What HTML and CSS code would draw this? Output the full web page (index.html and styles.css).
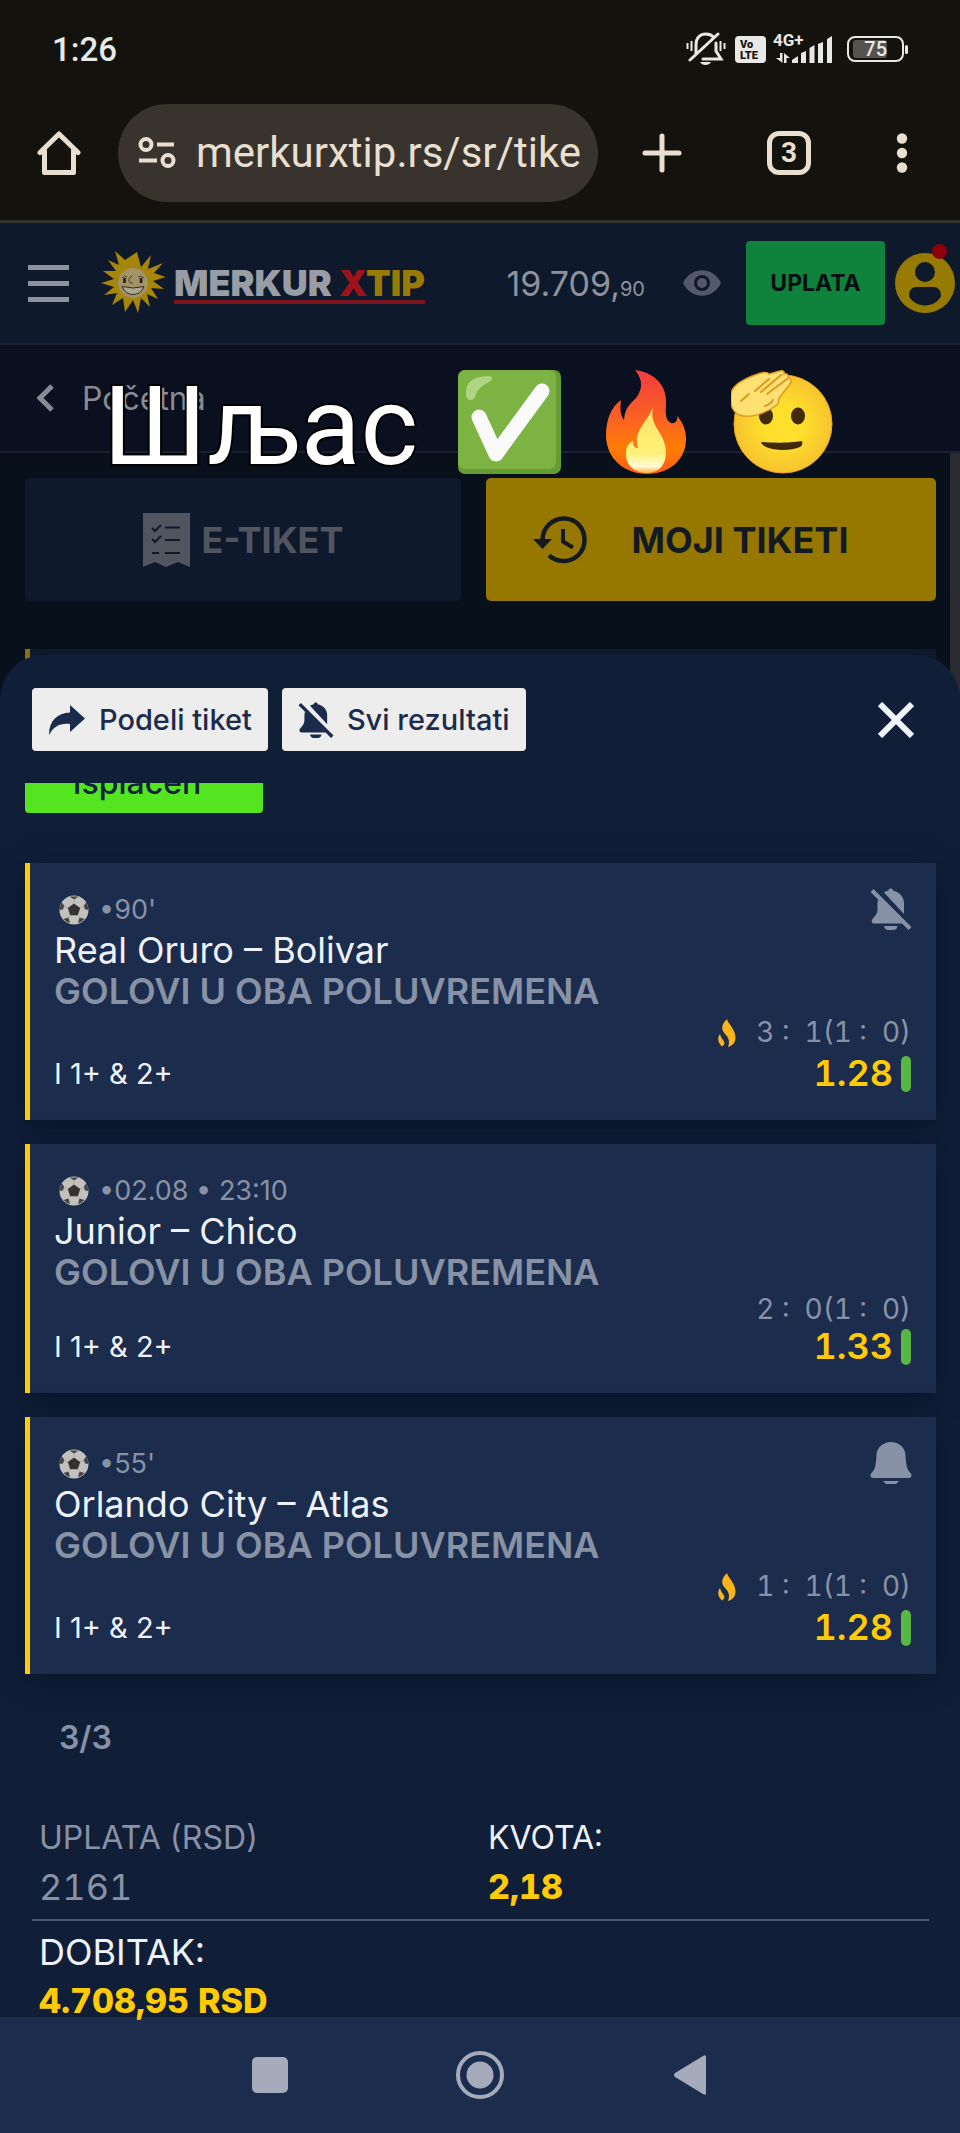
FILE: index.html
```html
<!DOCTYPE html>
<html lang="sr">
  <head>
    <meta charset="UTF-8" />
    <meta name="viewport" content="width=device-width, initial-scale=1.0" />
    <title>Moji tiketi - MerkurXtip</title>
    <link rel="stylesheet" href="styles.css">
  </head>
  <body>
    <!-- Shared icons -->
    <svg class="sprite" aria-hidden="true">
      <symbol id="ball" viewBox="0 0 30 30">
        <circle cx="15" cy="15" r="14.5" fill="#c3c1bd" />
        <path d="M15 8.5l6.2 4.5-2.4 7.300h-7.600L8.800 13z" fill="#333" />
        <path d="M10.500 1.500h9L15 4.500zM.8 12.500L2.500 7l2.800 3.800L4 14.500.6 15zM29.200 12.500L27.500 7l-2.800 3.800L26 14.500l3.400.5zM4.500 24l5-1.500 1.500 5.500-3-1zM25.500 24l-5-1.500-1.500 5.500 3-1z" fill="#444" />
        <path d="M15 4.500v4M8.800 13l-4-1.500M21.200 13l4-1.500M11.200 20.300L9 23M18.800 20.300L21 23" stroke="#a9a7a3" fill="none" />
      </symbol>
      <symbol id="bell-off" viewBox="0 0 42 42">
        <path d="M14 4.500C15.500 3.500 17 3 18.500 2.600 18.500 1 19.500.5 20.700.5s2.200.5 2.200 2.100C29.500 4 34 9 34 15v11z" fill="currentColor" />
        <path d="M8.500 11L33 35.500H4C1.500 35.500 1 33 2.500 31c3-3.500 5-5.500 5-10v-6c0-1.500.3-2.700 1-4zM14 38h13.500c-.5 2.500-2 4-4 4h-5.500c-2 0-3.500-1.500-4-4z" fill="currentColor" />
        <path d="M2 2.500L40 40.500" stroke="currentColor" stroke-width="4" />
      </symbol>
      <symbol id="bell" viewBox="0 0 42 42">
        <path d="M21 0c8 0 14 5.500 14.500 13 .5 9 1 14 5 18 1.500 1.500 1.500 5-1.500 5H3c-3 0-3-3.500-1.500-5 4-4 4.500-9 5-18C7 5.500 13 0 21 0zM13 39h16l-3 3H16z" fill="currentColor" />
      </symbol>
      <symbol id="flame" viewBox="0 0 18 28">
        <path d="M9 0c1 5 8.500 10 8.500 18.500 0 5-3 8.500-7.500 9.500 2-5 1-9-2.500-12.500C2 10 4 5 9 0zM2 15c-3 4-2 9 2 12.500 2-1 3-2.500 2-5-1-2-3.500-4-4-7.500z" fill="#fbb51b" />
      </symbol>
    </svg>

    <div class="status-bar">
      <span class="clock">1:26</span>
      <div class="status-icons">
        <svg width="40" height="34" viewBox="0 0 40 34" fill="none" stroke="currentColor" stroke-width="3">
          <path d="M10 22V13C10 6 14 2 20 2c3 0 5.500 1 7.500 3M30 11v8l5 8H17M4 28L32 2" stroke-linecap="round" />
          <path d="M5.500 9v10M1.500 11v6M34.500 9v10M38.500 11v6" stroke-width="2" />
          <path d="M14 30h11c-2 4-9 4-11 0z" fill="currentColor" stroke="none" />
        </svg>
        <span class="volte">Vo<br />LTE</span>
        <span class="signal">
          <span class="network">4G+</span>
          <svg width="60" height="27" viewBox="0 0 60 27" fill="currentColor">
            <path d="M5 17h2.500v10L1 22h4zM9 27V17l6 5h-3.500v5zM17 24l6-4v7h-6zM26 17l5-2v12h-5zM34.500 12l5-3v18h-5zM43 8l5-2v21h-5zM52 3l5-3v27h-5z" />
          </svg>
        </span>
        <span class="battery"><span>75</span></span>
      </div>
    </div>

    <div class="browser-bar">
      <button class="icon-btn" aria-label="Home">
        <svg width="44" height="44" viewBox="0 0 44 44" fill="none" stroke="currentColor" stroke-width="5" stroke-linejoin="round" stroke-linecap="round">
          <path d="M3 21.500L22 3l19 18.500M7.500 19v22.500h29V19" />
        </svg>
      </button>
      <label class="address">
        <svg width="38" height="31" viewBox="0 0 38 31" fill="none" stroke="currentColor" stroke-width="4">
          <circle cx="8" cy="7.500" r="5.500" />
          <path d="M19 7.500h17M1 23.500h18" />
          <circle cx="30" cy="23.500" r="5.500" />
        </svg>
        <input type="text" value="merkurxtip.rs/sr/tike" aria-label="Address" />
      </label>
      <div class="browser-actions">
        <button class="icon-btn" aria-label="New tab">
          <svg width="40" height="40" viewBox="0 0 40 40" stroke="currentColor" stroke-width="5" stroke-linecap="round"><path d="M20 3v34M3 20h34" /></svg>
        </button>
        <button class="tab-count">3</button>
        <button class="icon-btn" aria-label="Menu">
          <svg width="12" height="40" viewBox="0 0 12 40" fill="currentColor"><circle cx="6" cy="5.500" r="5.200" /><circle cx="6" cy="20" r="5.200" /><circle cx="6" cy="34.500" r="5.200" /></svg>
        </button>
      </div>
    </div>

    <header class="site-header">
      <button class="menu-btn" aria-label="Meni"><span></span><span></span><span></span></button>
      <a href="#" class="logo">
        <svg width="64" height="64" viewBox="-32 -32 64 64">
          <path fill="#a58609" d="M4-31l4 15 10-12-3 14 15-6-9 10 12 4-13 4 11 8-13-1 7 11-11-5 3 13-9-9-3 15-5-13-8 12-2-14-11 7 5-12-13 2 10-8-13-4 13-4-11-8 13 0-8-11 11 5-4-14 10 9z" />
          <circle r="15" fill="#a39368" />
          <path d="M-11-5q2-3 5-1M5-6q3-2 6 1M-1-7q-5 3-2 7l3 0" fill="none" stroke="#4b4529" stroke-width="1" />
          <path d="M-8.500-5v5M8-5v5" stroke="#1b1a12" stroke-width="2.500" />
          <path d="M-11 3.500q11 3 22 0-3 8-11 8t-11-8z" fill="#aaa68f" stroke="#33301f" stroke-width="1" />
        </svg>
        <span class="logo-text">MERKUR <span class="logo-x">X</span><span class="logo-tip">TIP</span></span>
      </a>
      <span class="balance">19.709,<small>90</small></span>
      <button class="icon-btn eye" aria-label="Prikaži stanje">
        <svg width="38" height="26" viewBox="0 0 38 26">
          <path d="M0 13C8-4 30-4 38 13 30 30 8 30 0 13z" fill="#53596a" />
          <circle cx="19" cy="13" r="8" fill="#0f192c" />
          <circle cx="19" cy="13" r="5" fill="#53596a" />
        </svg>
      </button>
      <button class="deposit-btn">UPLATA</button>
      <a href="#" class="avatar" aria-label="Profil">
        <svg width="60" height="60" viewBox="0 0 60 60">
          <circle cx="30" cy="30" r="30" fill="#977a02" />
          <circle cx="30" cy="19" r="10" fill="#0f192c" />
          <path d="M14 43c0-6 3-9 8-9h16c5 0 8 3 8 9-3 6-9 9.500-16 9.500S17 49 14 43z" fill="#0f192c" />
        </svg>
      </a>
    </header>

    <nav class="breadcrumb">
      <a href="#">
        <svg width="18" height="28" viewBox="0 0 18 28" fill="none" stroke="currentColor" stroke-width="5"><path d="M16 2L4 14l12 12" /></svg>
        Početna
      </a>
    </nav>

    <main class="page">
      <div class="tabs">
        <button class="tab">
          <svg width="47" height="54" viewBox="0 0 47 54">
            <path d="M0 0h47v54l-12-5-12 5-11-5-12 5z" fill="currentColor" />
            <path d="M9 15l3 3 6-6M9 26l3 3 6-6M22 14.500h15M22 27h15M22 40h15M9 40h7" fill="none" stroke="#0f192c" stroke-width="2" />
          </svg>
          E-TIKET
        </button>
        <button class="tab active">
          <svg width="54" height="48" viewBox="0 0 54 48" fill="none" stroke="currentColor">
            <path d="M9.500 24C9.500 12 19 2.500 31 2.500S51.500 12 51.500 24 42 45 31 45c-6 0-11-2-15-5.500" stroke-width="4.500" />
            <path d="M0 23h19L9.500 33z" fill="currentColor" stroke="none" />
            <path d="M30 13v12.500l10 6" stroke-width="4" />
          </svg>
          MOJI TIKETI
        </button>
      </div>
      <div class="ticket-behind"></div>
    </main>

    <section class="sheet">
      <div class="sheet-actions">
        <button class="light-btn">
          <svg width="38" height="32" viewBox="0 0 38 32"><path d="M22 1l15 13.500L22 28v-8C12 19 6 22 1 31 1 17 9 9 22 8.500z" fill="currentColor" /></svg>
          Podeli tiket
        </button>
        <button class="light-btn">
          <svg width="36" height="36"><use href="#bell-off" /></svg>
          Svi rezultati
        </button>
        <button class="icon-btn close-btn" aria-label="Zatvori">
          <svg width="36" height="36" viewBox="0 0 36 36" stroke="currentColor" stroke-width="6"><path d="M2 2l32 32M34 2L2 34" /></svg>
        </button>
      </div>

      <div class="ticket-status"><span>Isplaćen</span></div>

      <div class="bets">
        <article class="bet">
          <div class="bet-meta"><svg width="30" height="30"><use href="#ball" /></svg>•90'</div>
          <h2>Real Oruro – Bolivar</h2>
          <p class="market">GOLOVI U OBA POLUVREMENA</p>
          <p class="score live"><svg width="18" height="28"><use href="#flame" /></svg>3 :  1(1 :  0)</p>
          <div class="pick"><span>I 1+ &amp; 2+</span><b class="odds">1.28</b></div>
          <button class="icon-btn notify" aria-label="Uključi obaveštenja"><svg width="42" height="42"><use href="#bell-off" /></svg></button>
        </article>

        <article class="bet">
          <div class="bet-meta"><svg width="30" height="30"><use href="#ball" /></svg>•02.08 • 23:10</div>
          <h2>Junior – Chico</h2>
          <p class="market">GOLOVI U OBA POLUVREMENA</p>
          <p class="score">2 :  0(1 :  0)</p>
          <div class="pick"><span>I 1+ &amp; 2+</span><b class="odds">1.33</b></div>
        </article>

        <article class="bet">
          <div class="bet-meta"><svg width="30" height="30"><use href="#ball" /></svg>•55'</div>
          <h2>Orlando City – Atlas</h2>
          <p class="market">GOLOVI U OBA POLUVREMENA</p>
          <p class="score live"><svg width="18" height="28"><use href="#flame" /></svg>1 :  1(1 :  0)</p>
          <div class="pick"><span>I 1+ &amp; 2+</span><b class="odds">1.28</b></div>
          <button class="icon-btn notify" aria-label="Isključi obaveštenja"><svg width="42" height="42"><use href="#bell" /></svg></button>
        </article>
      </div>

      <p class="hits">3/3</p>

      <div class="summary">
        <div class="summary-row">
          <div class="stake"><span>UPLATA (RSD)</span><span class="amount">2161</span></div>
          <div><span>KVOTA:</span><strong>2,18</strong></div>
        </div>
        <div class="summary-row payout">
          <div><span class="amount">DOBITAK:</span><strong>4.708,95 RSD</strong></div>
        </div>
      </div>
    </section>

    <nav class="system-nav">
      <button class="icon-btn" aria-label="Recent">
        <svg width="54" height="54" viewBox="0 0 54 54"><rect x="9" y="9" width="36" height="36" rx="5" fill="currentColor" /></svg>
      </button>
      <button class="icon-btn" aria-label="Home">
        <svg width="54" height="54" viewBox="0 0 54 54"><circle cx="27" cy="27" r="22" fill="none" stroke="currentColor" stroke-width="4" /><circle cx="27" cy="27" r="13.500" fill="currentColor" /></svg>
      </button>
      <button class="icon-btn" aria-label="Back">
        <svg width="54" height="54" viewBox="0 0 54 54"><path d="M43 9v36q0 3-3 1L12 29q-2-2 0-4L40 8q3-2 3 1z" fill="currentColor" /></svg>
      </button>
    </nav>

    <!-- Caption over the page -->
    <div class="caption">
      <span>Шљас</span>
      <svg width="103" height="104" viewBox="0 0 103 104">
        <rect width="103" height="104" rx="7" fill="#679c35" />
        <rect width="98" height="99" rx="7" fill="#7cb342" />
        <path d="M8 24C8 12 14 7 30 6c6 0 5 4 1 6-8 4-12 8-14 15-2 5-9 4-9-3z" fill="#aed581" />
        <path d="M21 47l17 37 46-63" fill="none" stroke="#fafafa" stroke-width="15" stroke-linecap="round" stroke-linejoin="round" />
      </svg>
      <svg class="fire" width="80" height="104" viewBox="0 0 80 104">
        <defs>
          <linearGradient id="fire-outer" x1="0" y1="0" x2="0" y2="1"><stop offset="0" stop-color="#f23b3f" /><stop offset=".5" stop-color="#fb6521" /><stop offset=".75" stop-color="#ff7d05" /><stop offset="1" stop-color="#ff5b13" /></linearGradient>
          <linearGradient id="fire-inner" x1="0" y1="0" x2="0" y2="1"><stop offset="0" stop-color="#ffe36b" /><stop offset=".7" stop-color="#fff178" /><stop offset=".9" stop-color="#fffbd8" /><stop offset="1" stop-color="#ffb13b" /></linearGradient>
        </defs>
        <path d="M29 0c18 2 31 14 31 31 0 9-2 19 5 22 4 1 7-2 6-7 6 6 9 15 9 23 0 21-17 35-39 35S0 89 0 65c0-15 5-28 15-35-1 8-1 15 3 20 1-12 6-16 12-22 6-8 8-17-1-28z" fill="url(#fire-outer)" />
        <path d="M47 37c-3 14 4 20 9 30 8 16 4 36-15 36-15 0-22-10-21-21 0-5 3-9 7-11 0 6 2 7 5 7-5-18 9-25 15-41z" fill="url(#fire-inner)" />
      </svg>
      <svg class="salute" width="102" height="104" viewBox="0 0 102 104">
        <defs>
          <radialGradient id="face" cx=".5" cy=".5" r=".5"><stop offset=".4" stop-color="#fddf2c" /><stop offset="1" stop-color="#f7c32f" /></radialGradient>
        </defs>
        <circle cx="52" cy="54" r="49" fill="url(#face)" stroke="#e9a51d" />
        <ellipse cx="35" cy="46" rx="7" ry="8.500" fill="#422b0d" />
        <ellipse cx="67" cy="46" rx="7" ry="8.500" fill="#422b0d" />
        <path d="M31 72c10 1 30 1 39-1 2 0 2 4-1 6-9 4-25 4-34 0-4-2-6-5-4-5z" fill="#422b0d" />
        <path d="M0 23C2 15 13 9 24 5c5-2 12-4 14-1L49 1c3-1 5 1 4 3 3-1 5 1 4 4 3 0 4 3 2 6l-11 14-1 6C36 43 20 49 8 45-1 40-1 31 0 23z" fill="#ffe072" stroke="#dd9822" stroke-width="1.500" />
        <path d="M24 21L38 9M30 22L50 5M36 24L56 9M10 31l8-7M34 36q6-2 8-6" fill="none" stroke="#dd9822" stroke-width="2" stroke-linecap="round" />
      </svg>
    </div>
  </body>
</html>
```

FILE: styles.css
```css
:root {
  --sheet: #101e38;
  --card: #1c2c4c;
  --page: #08101c;
  --header: #0f192c;
  --muted: #8892a6;
  --text: #eef2fa;
  --yellow: #ffcb05;
  --green: #57b742;
  --chrome: #14120c;
  --chrome-text: #e8dfd0;
}

* {
  margin: 0;
  padding: 0;
  box-sizing: border-box;
  font-family: Inter, "Open Sans", sans-serif;
}

body {
  position: relative;
  min-height: 100vh;
  display: flex;
  flex-direction: column;
  background: var(--page);
  color: var(--text);
}

svg {
  display: block;
  flex-shrink: 0;
}

button {
  border: none;
  background: none;
  color: inherit;
  cursor: pointer;
}

a {
  color: inherit;
  text-decoration: none;
}

.sprite {
  position: absolute;
  width: 0;
  height: 0;
}

.icon-btn {
  display: flex;
}

/* Phone status bar */
.status-bar {
  display: flex;
  align-items: center;
  justify-content: space-between;
  height: 100px;
  padding: 0 56px 2px 52px;
  background: var(--chrome);
  color: #e8e8e6;
}

.clock {
  font: 500 33px Roboto, sans-serif;
}

.status-icons {
  display: flex;
  align-items: center;
  gap: 9px;
}

.volte {
  width: 31px;
  padding: 3px 0 2px 5px;
  border-radius: 4px;
  background: #e8e8e6;
  color: var(--chrome);
  font: 900 11px/11px Roboto, sans-serif;
}

.signal {
  position: relative;
  margin-right: 3px;
}

.network {
  position: absolute;
  top: -4px;
  left: -2px;
  font: 700 17px/17px Roboto, sans-serif;
}

.battery {
  position: relative;
  width: 57px;
  padding: 2px 4px;
  border: 2px solid currentColor;
  border-radius: 8px;
}

.battery span {
  display: block;
  width: 34px;
  border-radius: 3px;
  background: #55534e;
  font: 500 20px/18px Roboto, sans-serif;
  text-align: right;
}

.battery::after {
  content: "";
  position: absolute;
  top: 7px;
  right: -6px;
  width: 3px;
  height: 9px;
  border-radius: 2px;
  background: currentColor;
}

/* Browser toolbar */
.browser-bar {
  display: flex;
  align-items: center;
  height: 123px;
  padding: 0 52px 15px 37px;
  border-bottom: 3px solid #33302f;
  background: var(--chrome);
  color: var(--chrome-text);
}

.address {
  flex: 1;
  min-width: 0;
  display: flex;
  align-items: center;
  gap: 20px;
  height: 98px;
  margin-left: 37px;
  padding: 0 18px 0 20px;
  border-radius: 49px;
  background: #38332d;
}

.address input {
  flex: 1;
  min-width: 0;
  border: none;
  outline: none;
  background: none;
  color: var(--chrome-text);
  font: 400 42px Roboto, sans-serif;
}

.browser-actions {
  flex-shrink: 0;
  display: flex;
  align-items: center;
  justify-content: space-between;
  width: 310px;
  padding-left: 44px;
}

.tab-count {
  width: 44px;
  height: 44px;
  border: 5px solid currentColor;
  border-radius: 12px;
  font: 700 28px/34px Roboto, sans-serif;
}

/* Site header */
.site-header {
  display: flex;
  align-items: center;
  height: 122px;
  padding: 0 5px 0 28px;
  border-bottom: 2px solid #1b2335;
  background: var(--header);
  color: #8e929c;
}

.menu-btn {
  display: flex;
  flex-direction: column;
  gap: 11px;
}

.menu-btn span {
  width: 41px;
  height: 5px;
  background: #8e929c;
}

.logo {
  display: flex;
  align-items: center;
  gap: 9px;
  margin-left: 32px;
}

.logo-text {
  padding-top: 4px;
  border-bottom: 4px solid #7c141e;
  color: #999da6;
  font-size: 36px;
  font-weight: 900;
  line-height: 34px;
  white-space: nowrap;
}

.logo-x {
  color: #9c1319;
}

.logo-tip {
  color: #987a05;
}

.balance {
  margin-left: auto;
  font-size: 34px;
}

.balance small {
  font-size: 20px;
}

.eye {
  margin-left: 38px;
}

.deposit-btn {
  width: 139px;
  height: 84px;
  margin-left: 25px;
  border-radius: 4px;
  background: #0f823c;
  color: #050f12;
  font-size: 23px;
  font-weight: 700;
}

.avatar {
  position: relative;
  margin-left: 10px;
}

.avatar::after {
  content: "";
  position: absolute;
  top: -9px;
  right: 8px;
  width: 15px;
  height: 15px;
  border-radius: 50%;
  background: #8b0009;
}

.breadcrumb {
  display: flex;
  height: 108px;
  padding: 0 36px;
  border-bottom: 2px solid #1a2130;
  background: #0a101f;
  color: #888b93;
  font-size: 32px;
}

.breadcrumb a {
  display: flex;
  align-items: center;
  gap: 28px;
}

/* Page behind the sheet */
.page {
  padding: 25px 14px 0 25px;
  border-right: 10px solid #2a2b31;
}

.tabs {
  display: grid;
  grid-template-columns: 436fr 450fr;
  gap: 25px;
}

.tab {
  display: flex;
  align-items: center;
  justify-content: center;
  gap: 12px;
  height: 123px;
  border-radius: 5px;
  background: var(--header);
  color: #51555f;
  font-size: 36px;
  font-weight: 700;
}

.tab.active {
  gap: 45px;
  padding-right: 41px;
  background: #967800;
  color: #131a22;
}

.ticket-behind {
  height: 46px;
  margin-top: 48px;
  border-left: 5px solid #8a7014;
  background: var(--header);
}

/* Ticket sheet */
.sheet {
  flex: 1;
  position: relative;
  margin-top: -40px;
  padding: 33px 24px 0 25px;
  border-radius: 44px 44px 0 0;
  background: var(--sheet);
}

.sheet-actions {
  display: flex;
  align-items: center;
  gap: 14px;
  padding: 0 22px 0 7px;
}

.light-btn {
  display: flex;
  align-items: center;
  gap: 13px;
  height: 63px;
  padding: 0 16px;
  border-radius: 4px;
  background: #ededed;
  color: #1c2b4b;
  font-size: 29px;
  font-weight: 500;
}

.close-btn {
  margin-left: auto;
}

/* the badge is scrolled half out of view */
.ticket-status {
  display: flex;
  align-items: flex-end;
  height: 30px;
  margin-top: 32px;
  overflow: hidden;
}

.ticket-status span {
  width: 238px;
  height: 63px;
  padding-right: 14px;
  border-radius: 4px;
  background: #55e520;
  color: #0f2440;
  font-size: 32px;
  font-weight: 500;
  line-height: 66px;
  text-align: center;
}

.bets {
  display: flex;
  flex-direction: column;
  gap: 24px;
  margin-top: 50px;
}

.bet {
  position: relative;
  padding: 26px 25px 26px 24px;
  border-left: 5px solid var(--yellow);
  background: var(--card);
  box-shadow: 0 6px 24px rgba(4, 12, 26, 0.5);
  line-height: 41px;
}

.bet-meta {
  display: flex;
  align-items: center;
  gap: 10px;
  padding-left: 5px;
  color: var(--muted);
  font-size: 27px;
}

.bet h2 {
  font-size: 36px;
  font-weight: 400;
}

.market {
  color: var(--muted);
  font-size: 36px;
  font-weight: 600;
}

.score {
  display: flex;
  align-items: center;
  justify-content: flex-end;
  gap: 20px;
  color: var(--muted);
  font-size: 28px;
  font-variant-numeric: tabular-nums;
  line-height: 33px;
  white-space: pre;
}

.score.live {
  line-height: 41px;
}

.pick {
  display: flex;
  align-items: center;
  justify-content: space-between;
  font-size: 29px;
}

.odds {
  display: flex;
  align-items: center;
  gap: 8px;
  color: var(--yellow);
  font-size: 36px;
  font-weight: 600;
  font-variant-numeric: tabular-nums;
}

.odds::after {
  content: "";
  width: 10px;
  height: 36px;
  border-radius: 5px;
  background: var(--green);
}

.notify {
  position: absolute;
  top: 25px;
  right: 24px;
  color: var(--muted);
}

.hits {
  margin-top: 48px;
  padding-left: 34px;
  color: var(--muted);
  font-size: 32px;
  font-weight: 600;
  line-height: 32px;
}

/* Summary */
.summary {
  margin-top: 68px;
  padding: 0 7px;
  font-size: 32px;
  font-variant-numeric: tabular-nums;
  line-height: 32px;
}

.summary-row {
  display: grid;
  grid-template-columns: 1fr 1fr;
  gap: 15px;
  padding: 0 7px 16px;
}

.summary-row div {
  display: flex;
  flex-direction: column;
  gap: 17px;
}

.summary-row.payout {
  padding: 15px 7px 0;
  border-top: 2px solid #46536d;
}

.summary strong {
  color: var(--yellow);
  font-size: 34px;
  font-weight: 800;
  white-space: nowrap;
}

.amount {
  font-size: 36px;
}

.stake {
  color: var(--muted);
}

.system-nav {
  display: flex;
  align-items: center;
  justify-content: center;
  gap: 156px;
  height: 116px;
  background: var(--card);
  color: #a5abba;
}

/* Caption */
.caption {
  position: absolute;
  top: 370px;
  left: 103px;
  display: flex;
  align-items: center;
  height: 104px;
}

.caption span {
  margin-right: 40px;
  color: #fff;
  font: 400 110px/104px Roboto, sans-serif;
  padding-top: 10px;
  paint-order: stroke;
  -webkit-text-stroke: 4px #000;
}

.fire {
  margin-left: 45px;
}

.salute {
  margin-left: 45px;
}
```
